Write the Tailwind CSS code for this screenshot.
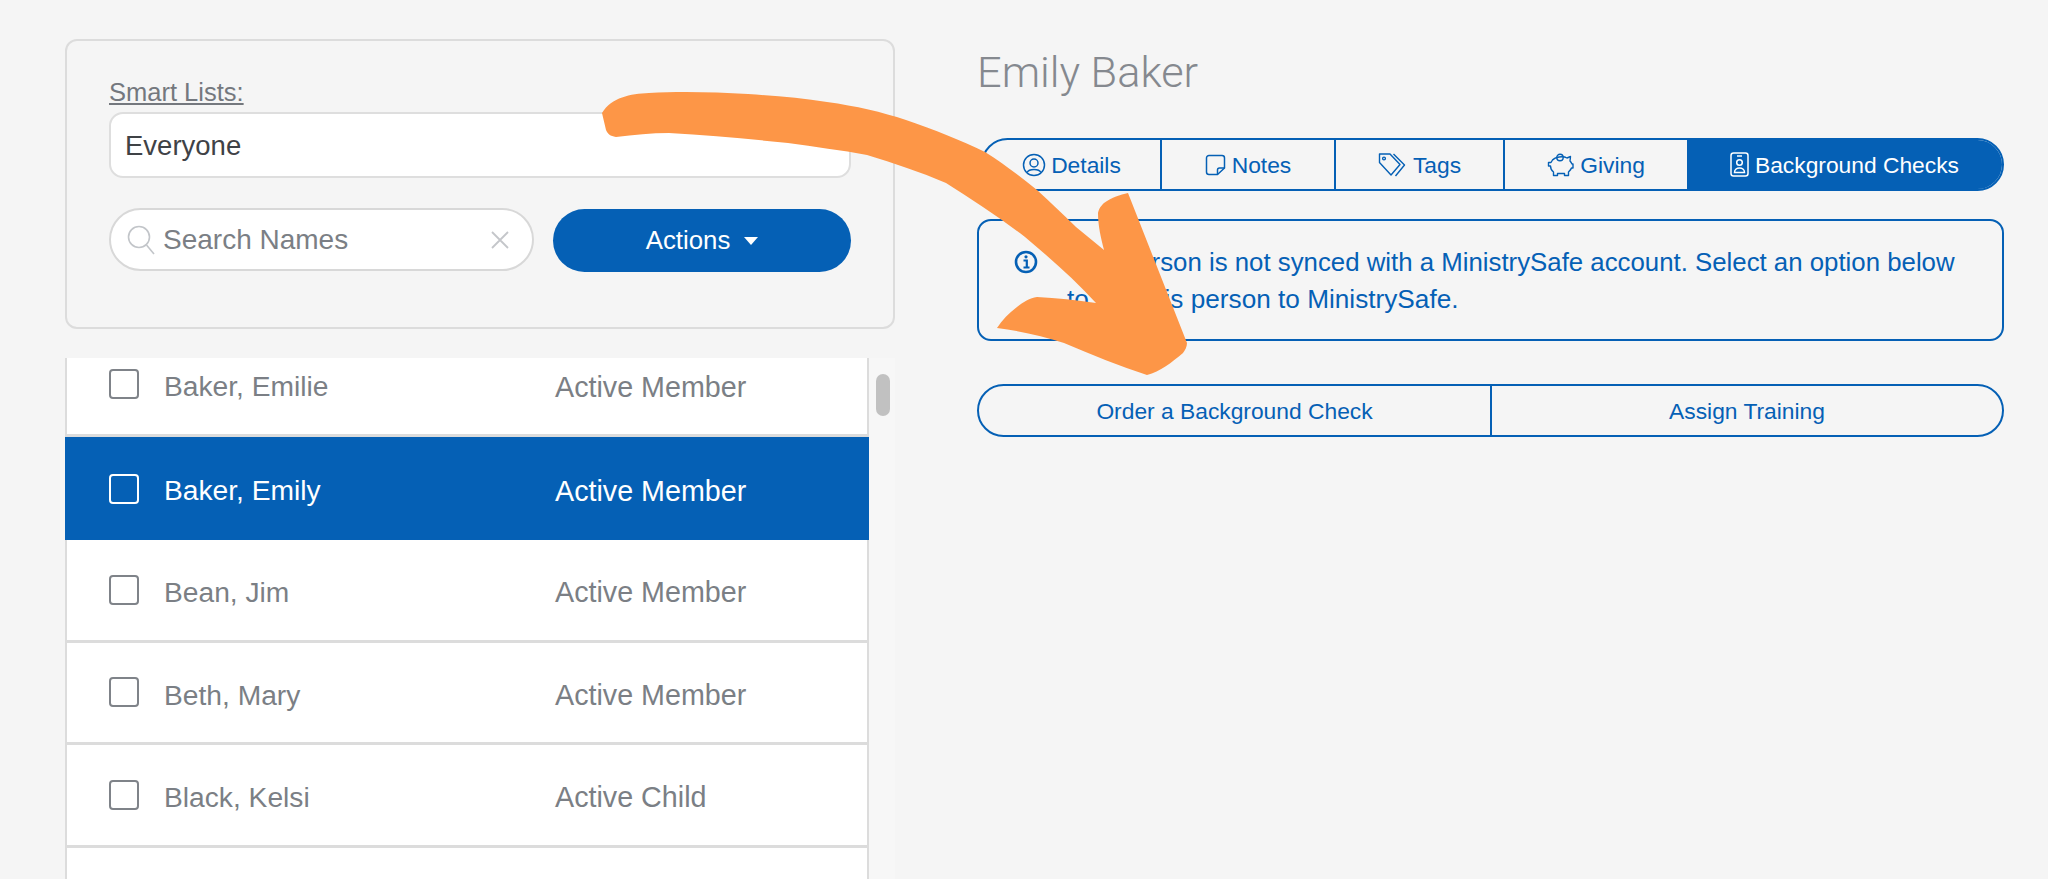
<!DOCTYPE html>
<html lang="en">
<head>
    <meta charset="UTF-8">
    <title>Background Checks</title>
    <script src="https://cdn.jsdelivr.net/npm/@tailwindcss/browser@4"></script>
</head>
<body class="bg-[#f5f5f5] font-['Liberation_Sans',Arial,sans-serif]">
    <div class="relative flex h-[879px] w-[2048px] overflow-hidden pl-[65px]">

        <!-- Left column -->
        <div class="w-[830px] shrink-0 pt-[39px]">
            <div class="h-[290px] rounded-[12px] border-2 border-[#dcdcdc] pl-[42px] pt-[39px]">
                <div class="h-[25px] text-[25.5px] leading-[24px] text-[#74787e] underline underline-offset-2">Smart Lists:</div>
                <div class="mt-[7px] flex h-[66px] w-[742px] items-center rounded-[14px] border-2 border-[#dedede] bg-white pl-[14px] pt-[1px] text-[27.5px] text-[#3f4246]">Everyone</div>
                <div class="mt-[30px] flex w-[742px] gap-[19px]">
                    <div class="flex h-[63px] w-[425px] items-center rounded-full border-2 border-[#d8d8d8] bg-white pl-[15px] pr-[22px]">
                        <svg class="h-[34px] w-[30px]" viewBox="0 0 30 34" fill="none" stroke="#c2c5c9" stroke-width="1.6"><circle cx="13" cy="14" r="10.5"/><path d="M20.5 22 L28 31"/></svg>
                        <span class="ml-[7px] text-[28px] text-[#7b7f85]">Search Names</span>
                        <svg class="ml-auto h-[20px] w-[20px]" viewBox="0 0 20 20" fill="none" stroke="#c4c6ca" stroke-width="1.8"><path d="M2 2 L18 18 M18 2 L2 18"/></svg>
                    </div>
                    <div class="mt-[1px] flex h-[63px] w-[298px] items-center justify-center gap-[14px] rounded-full bg-[#0560b5] text-[25.8px] text-white">
                        <span>Actions</span>
                        <svg class="h-[8px] w-[14px]" viewBox="0 0 14 8" fill="#fff"><path d="M0 0 H14 L7 8 Z"/></svg>
                    </div>
                </div>
            </div>

            <!-- People list -->
            <div class="mt-[29px] flex h-[521px]">
                <div class="h-full w-[804px] overflow-hidden">
                    <div class="-mt-[24px]">
                        <div class="flex h-[103px] items-center border-x-2 border-b-[3px] border-[#dcdcdc] bg-white pl-[42px] text-[28.2px] text-[#7b7f85]">
                            <span class="h-[30px] w-[30px] rounded-[4px] border-2 border-[#7f8389]"></span>
                            <span class="ml-[25px] w-[391px] pt-[5px]">Baker, Emilie</span><span class="pt-[7px] text-[28.7px]">Active Member</span>
                        </div>
                        <div class="flex h-[103px] items-center bg-[#0560b5] pl-[44px] text-[28.2px] text-white">
                            <span class="h-[30px] w-[30px] rounded-[4px] border-2 border-white"></span>
                            <span class="ml-[25px] w-[391px] pt-[4px]">Baker, Emily</span><span class="pt-[6px] text-[28.7px]">Active Member</span>
                        </div>
                        <div class="flex h-[102.5px] items-center border-x-2 border-b-[3px] border-[#dcdcdc] bg-white pl-[42px] text-[28.2px] text-[#7b7f85]">
                            <span class="h-[30px] w-[30px] rounded-[4px] border-2 border-[#7f8389]"></span>
                            <span class="ml-[25px] w-[391px] pt-[5px]">Bean, Jim</span><span class="pt-[6px] text-[28.7px]">Active Member</span>
                        </div>
                        <div class="flex h-[102.5px] items-center border-x-2 border-b-[3px] border-[#dcdcdc] bg-white pl-[42px] text-[28.2px] text-[#7b7f85]">
                            <span class="h-[30px] w-[30px] rounded-[4px] border-2 border-[#7f8389]"></span>
                            <span class="ml-[25px] w-[391px] pt-[5px]">Beth, Mary</span><span class="pt-[6px] text-[28.7px]">Active Member</span>
                        </div>
                        <div class="flex h-[102.5px] items-center border-x-2 border-b-[3px] border-[#dcdcdc] bg-white pl-[42px] text-[28.2px] text-[#7b7f85]">
                            <span class="h-[30px] w-[30px] rounded-[4px] border-2 border-[#7f8389]"></span>
                            <span class="ml-[25px] w-[391px] pt-[5px]">Black, Kelsi</span><span class="pt-[6px] text-[28.7px]">Active Child</span>
                        </div>
                        <div class="h-[102.5px] border-x-2 border-[#dcdcdc] bg-white"></div>
                    </div>
                </div>
                <div class="h-full w-[26px] bg-[#f7f7f7] pl-[7px] pt-[16px]">
                    <div class="h-[42px] w-[14px] rounded-full bg-[#c1c1c1]"></div>
                </div>
            </div>
        </div>

        <!-- Right column -->
        <div class="ml-[82px] w-[1027px] shrink-0">
            <h1 class="mb-[39px] mt-[46px] h-[53px] text-[43.3px] font-light leading-[53px] text-[#85898f] font-['Roboto',sans-serif]">Emily Baker</h1>

            <div class="ml-[4px] flex h-[53px] w-[1023px] overflow-hidden rounded-full border-2 border-[#0560b5] text-[22.8px] text-[#0560b5]">
                <div class="flex w-[179px] items-center justify-center gap-[5px] border-r-2 border-[#0560b5] pt-[2px]">
                    <svg class="-mt-[2px] h-[24px] w-[24px]" viewBox="0 0 24 24" fill="none" stroke="#0560b5" stroke-width="1.5"><circle cx="12" cy="12" r="10.5"/><circle cx="12" cy="10" r="4"/><path d="M5 19.5 C7 15.5 17 15.5 19 19.5"/></svg>
                    <span>Details</span>
                </div>
                <div class="flex w-[174px] items-center justify-center gap-[6px] border-r-2 border-[#0560b5] pt-[2px]">
                    <svg class="-mt-[2px] h-[22px] w-[21px]" viewBox="0 0 21 22" fill="none" stroke="#0560b5" stroke-width="1.5" stroke-linejoin="round"><path d="M4 1.5 H17 A2.5 2.5 0 0 1 19.5 4 V14 L12.5 20.5 H4 A2.5 2.5 0 0 1 1.5 18 V4 A2.5 2.5 0 0 1 4 1.5 Z"/><path d="M19.5 14 H14.5 A2 2 0 0 0 12.5 16 V20.5"/></svg>
                    <span>Notes</span>
                </div>
                <div class="flex w-[169px] items-center justify-center gap-[7px] border-r-2 border-[#0560b5] pt-[2px]">
                    <svg class="-mt-[2px] h-[26px] w-[28px]" viewBox="0 0 28 26" fill="none" stroke="#0560b5" stroke-width="1.4" stroke-linejoin="round"><path d="M1.5 2 H12 L22 12.5 L13 23 L1.5 10.5 Z"/><circle cx="6" cy="6.5" r="1.4"/><path d="M15.5 2 L26.5 13 L17.5 24"/></svg>
                    <span>Tags</span>
                </div>
                <div class="flex w-[182px] items-center justify-center gap-[6px] pt-[2px]">
                    <svg class="-mt-[2px] h-[24px] w-[27px]" viewBox="0 0 27 24" fill="none" stroke="#0560b5" stroke-width="1.4" stroke-linejoin="round"><path d="M5.5 7 C8 4 16 2.5 20 5 L23.5 3.5 L23 8 C24 9 24.5 10 25 11 H26 V15 H24.5 C24 16.5 22.5 18 21.5 19 V22.5 H17.5 V20.5 H10.5 V22.5 H6.5 V19 C4.5 17.5 3.5 15.5 3.5 13 H1.5 V9.5 H4 Z"/><circle cx="13" cy="4.5" r="3.2"/></svg>
                    <span>Giving</span>
                </div>
                <div class="flex flex-1 items-center justify-center gap-[6px] bg-[#0560b5] pt-[2px] text-white">
                    <svg class="-mt-[2px] h-[25px] w-[19px]" viewBox="0 0 19 25" fill="none" stroke="#fff" stroke-width="1.5"><rect x="1" y="1" width="17" height="23" rx="2.5"/><path d="M7 4 H12"/><circle cx="9.5" cy="10.5" r="2.8"/><path d="M4.5 20.5 C4.5 14.5 14.5 14.5 14.5 20.5 Z"/></svg>
                    <span>Background Checks</span>
                </div>
            </div>

            <div class="mt-[28px] flex h-[122px] w-[1027px] rounded-[14px] border-2 border-[#0560b5] pl-[35px] pt-[23px] text-[25.8px] leading-[37px] text-[#0560b5]">
                <svg class="mt-[6px] h-[24px] w-[24px] shrink-0" viewBox="0 0 24 24" fill="none" stroke="#0560b5" stroke-width="2.6"><circle cx="12" cy="12" r="10"/><path d="M9.5 10.5 H12.8 V17.5 M9.5 17.5 H15.5" stroke-width="2.2"/><circle cx="12" cy="6.8" r="1.6" fill="#0560b5" stroke="none"/></svg>
                <p class="ml-[29px] w-[940px]">This person is not synced with a MinistrySafe account. Select an option below<br><span class="text-[26.2px]">to link this person to MinistrySafe.</span></p>
            </div>

            <div class="mt-[43px] flex h-[53px] w-[1027px] overflow-hidden rounded-full border-2 border-[#0560b5] pt-[2px] text-[22.8px] text-[#0560b5]">
                <div class="-mt-[2px] flex w-[513px] items-center justify-center border-r-2 border-[#0560b5] pt-[2px]">Order a Background Check</div>
                <div class="flex flex-1 items-center justify-center">Assign Training</div>
            </div>
        </div>

        <!-- Orange annotation arrow -->
        <svg class="absolute left-0 top-0 h-[879px] w-[2048px]" viewBox="0 0 2048 879" fill="#fd9647">
            <path d="M602 113 C612 97 630 94 649 93 C680 91 715 92 748 94 C775 96 802 98 827 102 C856 106 882 112 906 120 C935 130 960 140 985 152 C1004 164 1021 177 1037 190 C1050 202 1063 214 1076 227 L1104 250 C1101 238 1098 226 1098 213 C1099 208 1101 206 1104 203 C1112 197 1120 195 1128 193 L1187 343 C1187 347 1185 350 1183 353 C1172 362 1160 372 1147 375 C1120 366 1092 355 1064 343 C1043 336 1020 331 997 328 C1002 320 1009 313 1017 307 C1023 302 1030 298 1037 297 C1057 298 1076 300 1096 303 C1075 280 1050 258 1025 237 C1000 218 973 200 946 183 C920 172 894 163 867 155 C841 150 815 147 788 143 C748 139 709 135 669 133 C651 133 634 135 616 137 C610 136 608 134 606 130 Z"/>
        </svg>
    </div>
</body>
</html>
